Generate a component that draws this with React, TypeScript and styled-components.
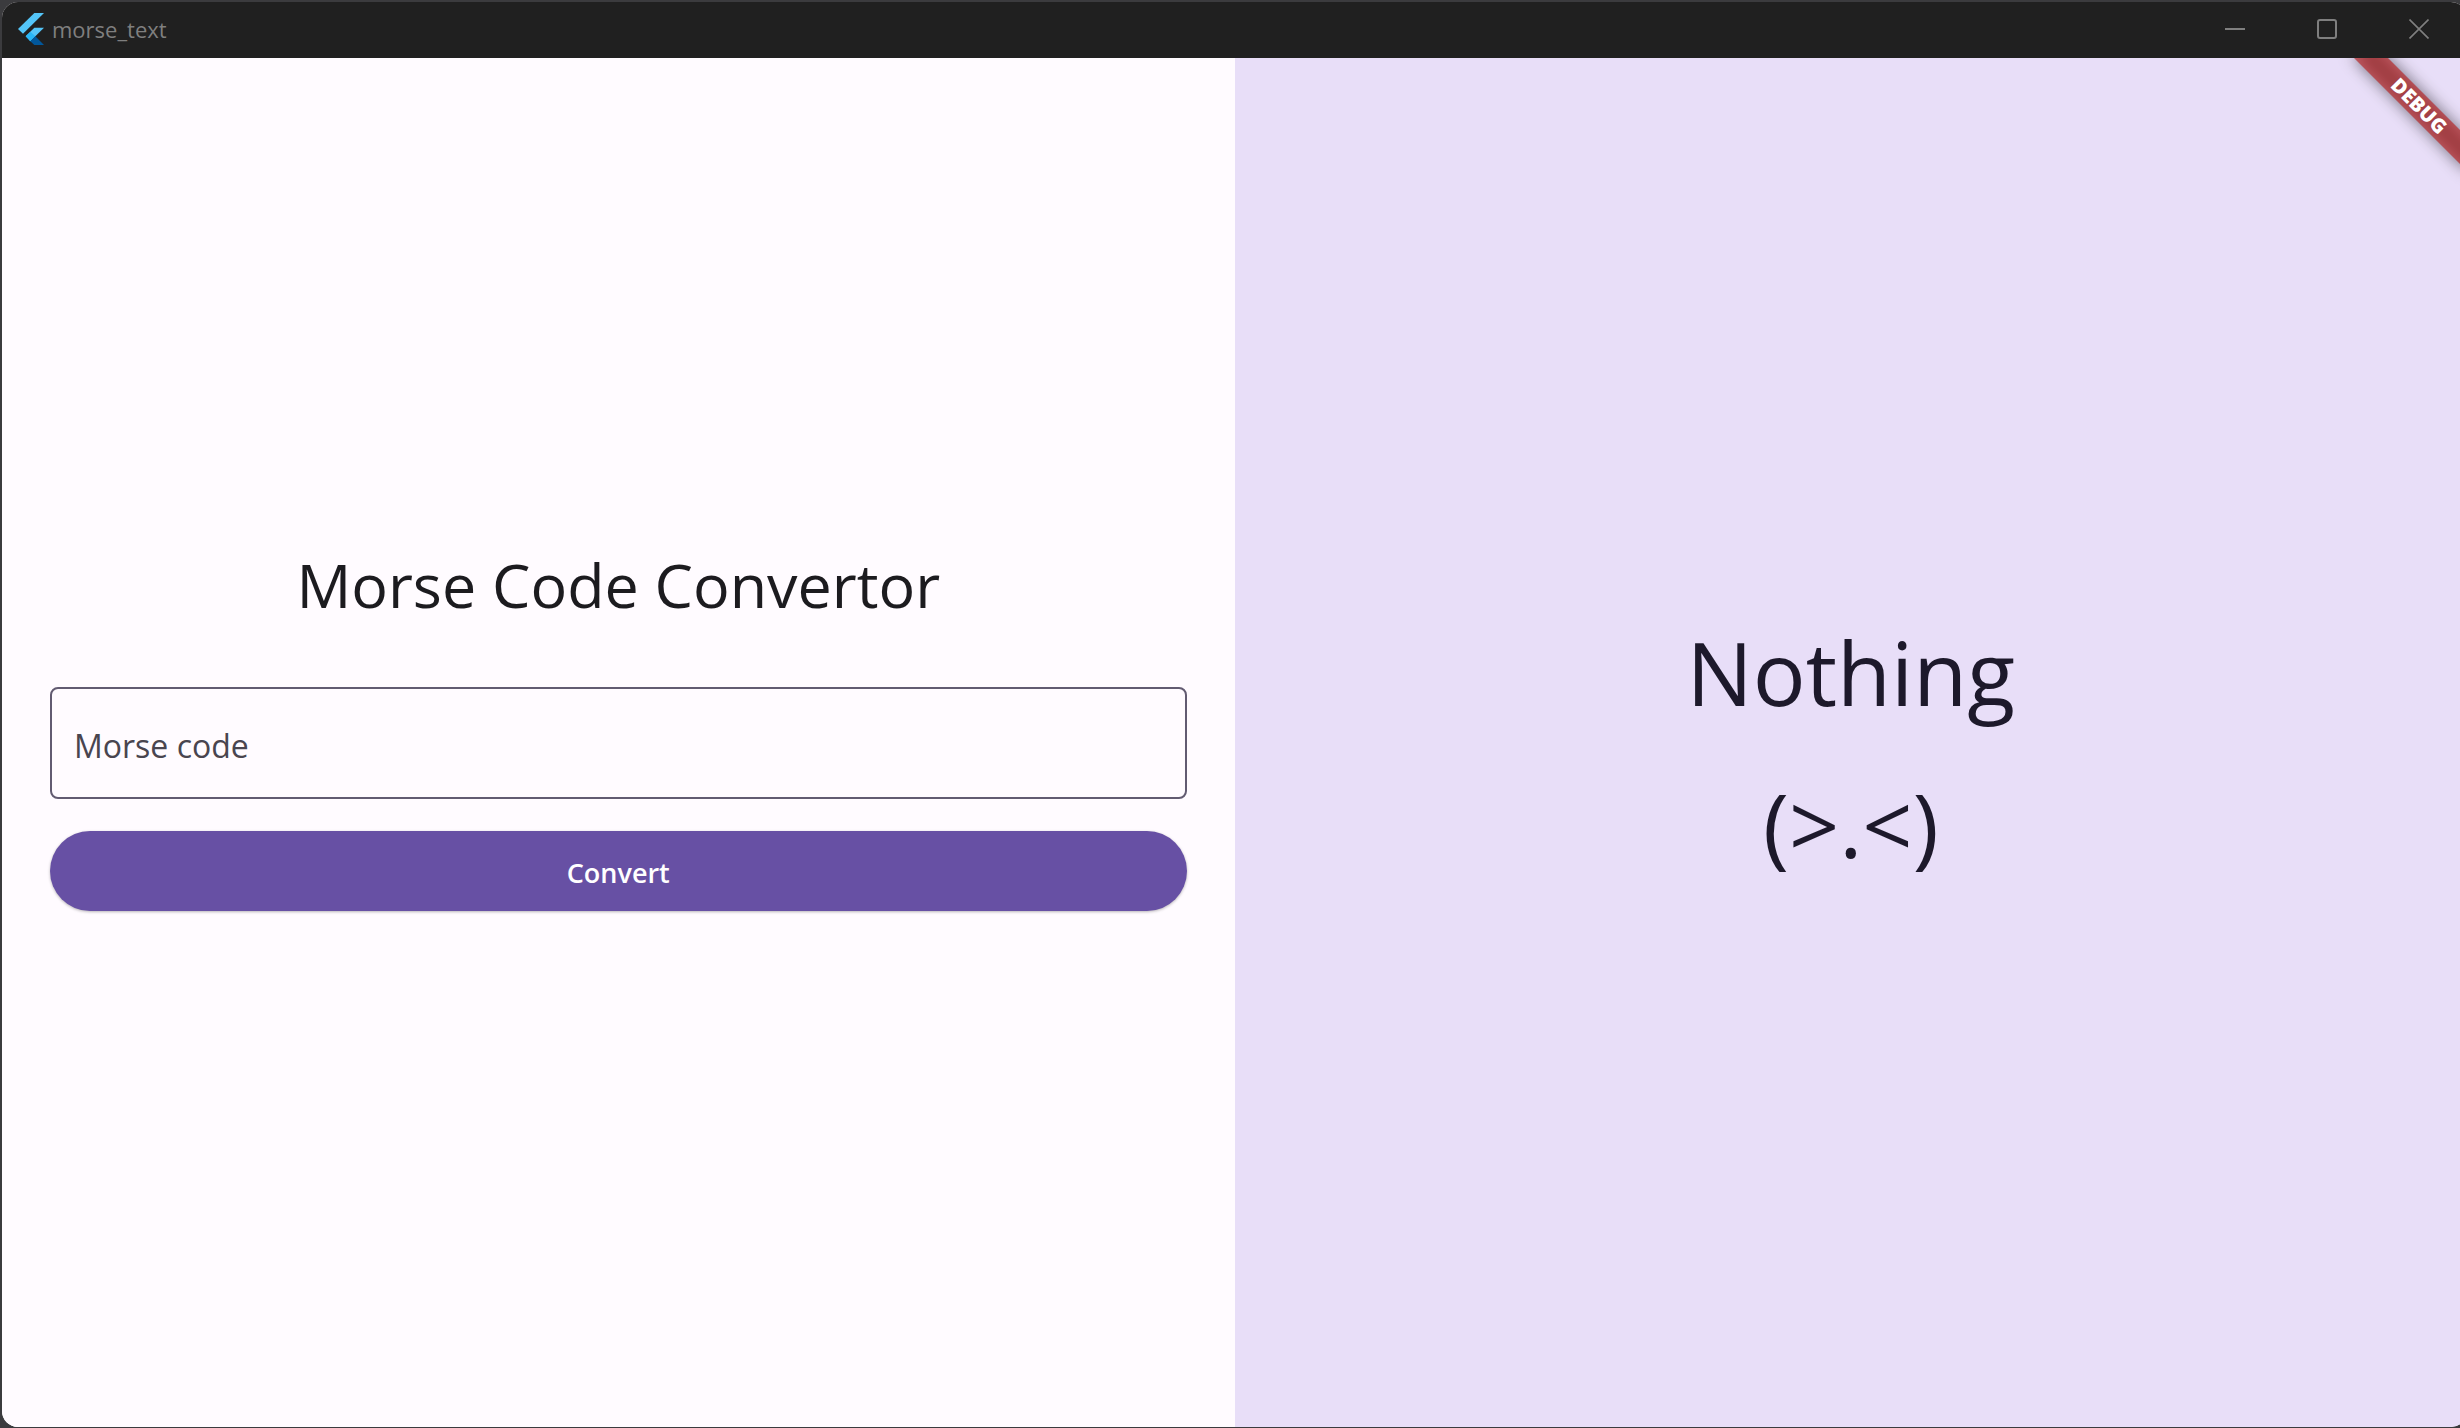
import React, { useState } from "react";
import styled, { createGlobalStyle } from "styled-components";

const GlobalStyle = createGlobalStyle`
  * { box-sizing: border-box; }
  html, body { margin: 0; height: 100%; }
  body {
    background: #3b3b3e;
    overflow: hidden;
    font-family: "Open Sans", "Noto Sans", sans-serif;
  }
  #root { height: 100%; }
`;

const Desktop = styled.div`
  height: 100vh;
  padding: 2px 0 1px 2px;
`;

const Window = styled.div`
  display: flex;
  flex-direction: column;
  height: 100%;
  margin-right: -7px;
  border-radius: 16px;
  overflow: hidden;
  background: #fffbff;
`;

const TitleBar = styled.header`
  display: flex;
  align-items: stretch;
  flex: none;
  height: 56px;
  padding: 0 2px 2px 16px;
  background: #202020;
  color: #7f7f7f;
`;

const AppTitle = styled.div`
  display: flex;
  flex: 1;
  align-items: center;
  gap: 8px;
  font-size: 22px;
  line-height: 32px;
`;

const WindowButton = styled.button`
  display: flex;
  align-items: center;
  justify-content: center;
  width: 92px;
  padding: 0;
  border: 0;
  background: transparent;
  color: inherit;
`;

const Content = styled.main`
  position: relative;
  display: grid;
  grid-template-columns: 1fr 1fr;
  flex: 1;
  min-height: 0;
  overflow: hidden;
`;

const FormPane = styled.form`
  display: flex;
  flex-direction: column;
  justify-content: center;
  gap: 32px;
  padding: 0 48px 32px;
  background: #fffbff;
`;

const Heading = styled.h1`
  margin: 0 0 28px;
  color: #1c1b1f;
  font-size: 61px;
  font-weight: 400;
  line-height: 84px;
  text-align: center;
`;

const CodeInput = styled.input`
  width: 100%;
  height: 112px;
  padding: 6px 22px 0;
  border: 2px solid #625b71;
  border-radius: 8px;
  outline: 0;
  background: transparent;
  color: #1c1b1f;
  font: 400 32px "Open Sans", "Noto Sans", sans-serif;

  &::placeholder {
    color: #49454f;
    opacity: 1;
  }
`;

const ConvertButton = styled.button`
  height: 80px;
  padding: 4px 48px 0;
  border: 0;
  border-radius: 40px;
  background: #6750a4;
  box-shadow: 0 1px 3px rgba(0, 0, 0, 0.28);
  color: #ffffff;
  font: 600 27px "Open Sans", "Noto Sans", sans-serif;
`;

const ResultPane = styled.output`
  display: flex;
  flex-direction: column;
  align-items: center;
  justify-content: center;
  gap: 32px;
  padding-top: 10px;
  background: #e8def8;
  color: #1d192b;
  font-size: 88px;
  line-height: 120px;
`;

const DebugBanner = styled.div`
  position: absolute;
  top: 36px;
  right: -32px;
  width: 160px;
  height: 24px;
  transform: rotate(45deg);
  color: #ffffff;
  font: 800 20px/24px "Open Sans", "Noto Sans", sans-serif;
  text-align: center;

  &::before {
    content: "";
    position: absolute;
    inset: 0;
    background: rgba(0, 0, 0, 0.5);
    filter: blur(8px);
  }
`;

const BannerLabel = styled.span`
  position: relative;
  display: block;
  background: rgba(183, 28, 28, 0.63);
`;

function FlutterLogo() {
  return (
    <svg width="26" height="32" viewBox="0 0 78 96" aria-hidden="true">
      <path d="M49 0H78L15 62L0 48Z" fill="#54c5f8" />
      <path d="M49 44H78L52 70L37 85L23 70Z" fill="#54c5f8" />
      <path d="M23 70L37 56L52 70L37 85Z" fill="#29b6f6" />
      <path d="M37 85L52 70L78 96H49Z" fill="#01579b" />
    </svg>
  );
}

const MORSE: Record<string, string> = {
  ".-": "A", "-...": "B", "-.-.": "C", "-..": "D", ".": "E", "..-.": "F",
  "--.": "G", "....": "H", "..": "I", ".---": "J", "-.-": "K", ".-..": "L",
  "--": "M", "-.": "N", "---": "O", ".--.": "P", "--.-": "Q", ".-.": "R",
  "...": "S", "-": "T", "..-": "U", "...-": "V", ".--": "W", "-..-": "X",
  "-.--": "Y", "--..": "Z",
};

export default function App() {
  const [code, setCode] = useState("");
  const [result, setResult] = useState("");

  const convert = (event: React.FormEvent) => {
    event.preventDefault();
    setResult(
      code
        .trim()
        .split(/\s+/)
        .map((symbol) => MORSE[symbol] ?? "")
        .join("")
    );
  };

  return (
    <>
      <GlobalStyle />
      <Desktop>
        <Window>
          <TitleBar>
            <AppTitle>
              <FlutterLogo />
              <span>morse_text</span>
            </AppTitle>
            <WindowButton type="button" aria-label="Minimize">
              <svg width="20" height="20" viewBox="0 0 20 20">
                <path d="M0 10H20" stroke="currentColor" strokeWidth="2" />
              </svg>
            </WindowButton>
            <WindowButton type="button" aria-label="Maximize">
              <svg width="20" height="20" viewBox="0 0 20 20">
                <rect x="1" y="1" width="18" height="18" rx="2" fill="none" stroke="currentColor" strokeWidth="2" />
              </svg>
            </WindowButton>
            <WindowButton type="button" aria-label="Close">
              <svg width="20" height="20" viewBox="0 0 20 20">
                <path d="M0.5 0.5L19.5 19.5M19.5 0.5L0.5 19.5" stroke="currentColor" strokeWidth="1.6" />
              </svg>
            </WindowButton>
          </TitleBar>
          <Content>
            <FormPane onSubmit={convert}>
              <Heading>Morse Code Convertor</Heading>
              <CodeInput
                aria-label="Morse code"
                placeholder="Morse code"
                value={code}
                onChange={(event) => setCode(event.target.value)}
              />
              <ConvertButton type="submit">Convert</ConvertButton>
            </FormPane>
            <ResultPane>
              {result ? (
                <span>{result}</span>
              ) : (
                <>
                  <span>Nothing</span>
                  <span>{"(>.<)"}</span>
                </>
              )}
            </ResultPane>
            <DebugBanner>
              <BannerLabel>DEBUG</BannerLabel>
            </DebugBanner>
          </Content>
        </Window>
      </Desktop>
    </>
  );
}
